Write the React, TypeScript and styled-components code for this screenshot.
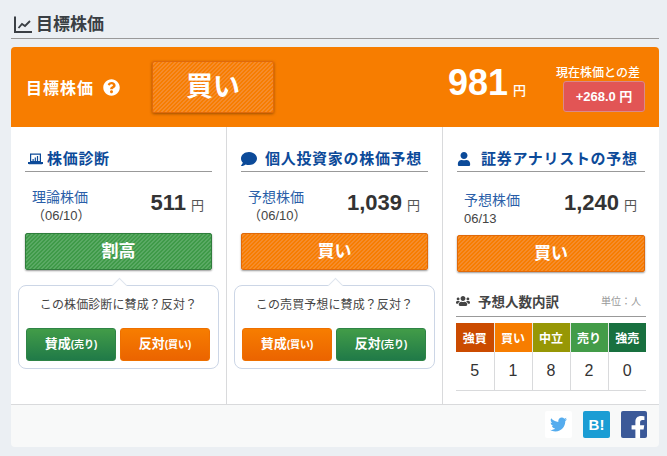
import styled, { createGlobalStyle } from "styled-components";
import { FaComment, FaFacebookF, FaQuestionCircle, FaTwitter, FaUser, FaUsers } from "react-icons/fa";

const GlobalStyle = createGlobalStyle`
  html, body {
    margin: 0;
    padding: 0;
    background: #ebeff3;
  }
  * {
    box-sizing: border-box;
  }
  body {
    font-family: "Liberation Sans", "Noto Sans CJK JP", sans-serif;
    color: #333;
  }
`;

const orangeStripes = "repeating-linear-gradient(135deg, #f77d00 0 1.414px, #f58c2c 1.414px 2.828px)";
const greenStripes = "repeating-linear-gradient(135deg, #3f9a48 0 1.414px, #5aa964 1.414px 2.828px)";

const Page = styled.div`
  width: 667px;
  height: 456px;
  padding: 0 8px 9px 11px;
  overflow: hidden;
`;

//=============================== Title =========================================
const PageTitle = styled.h2`
  display: flex;
  align-items: center;
  gap: 3px;
  height: 39px;
  margin: 0 0 8px;
  padding: 11px 0 0 3px;
  border-bottom: 1px solid #999;
  font-size: 17px;
  line-height: 24px;
  font-weight: 700;
  color: #3a3f44;
`;

//=============================== Banner =========================================
const Banner = styled.div`
  display: flex;
  align-items: center;
  height: 80px;
  padding: 0 14px 0 15px;
  background: #f77d00;
  border-radius: 4px 4px 0 0;
  color: #fff;
`;

const BannerLabel = styled.div`
  display: flex;
  align-items: center;
  gap: 9px;
  width: 126px;
  font-size: 16px;
  letter-spacing: 1px;
  font-weight: 700;
`;

const BannerVerdict = styled.div`
  width: 122px;
  height: 52px;
  margin-top: -1px;
  border: 1px solid #e0690a;
  border-radius: 2px;
  background: ${orangeStripes};
  box-shadow: 0 1px 3px rgba(100, 50, 0, 0.6);
  font-size: 27px;
  line-height: 50px;
  font-weight: 700;
  text-align: center;
`;

const BannerPrice = styled.div`
  margin-left: auto;
  margin-right: 30px;
  font-size: 36px;
  line-height: 40px;
  font-weight: 700;
  small {
    margin-left: 5px;
    font-size: 13px;
    font-weight: 500;
  }
`;

const DiffBox = styled.div`
  display: flex;
  flex-direction: column;
  align-items: flex-end;
  gap: 1px;
  padding-top: 3px;
  font-size: 12px;
  line-height: 14px;
  font-weight: 500;
  white-space: nowrap;
  span {
    margin-right: 5px;
  }
`;

const DiffValue = styled.div`
  width: 82px;
  height: 31px;
  border: 1px solid #d98a8a;
  border-radius: 3px;
  background: #e25555;
  font-size: 13px;
  line-height: 29px;
  font-weight: 700;
  text-align: center;
`;

//=============================== Columns ========================================
const Columns = styled.div`
  display: grid;
  grid-template-columns: 215px 216px 217px;
  height: 278px;
  background: #fff;
  border-bottom: 1px solid #d9dadc;
`;

const Column = styled.section`
  padding: 20px 14px 0;
  & + & {
    border-left: 1px solid #d9dadc;
  }
`;

const Heading = styled.h3<{ $gap: number }>`
  display: flex;
  align-items: center;
  gap: ${(props) => props.$gap}px;
  height: 25px;
  margin: 0;
  padding-bottom: 1px;
  border-bottom: 1px solid #999;
  font-size: 15px;
  letter-spacing: 0.7px;
  line-height: 20px;
  font-weight: 700;
  color: #0c4a99;
  white-space: nowrap;
`;

const PriceRow = styled.div<{ $tall?: boolean }>`
  display: flex;
  align-items: flex-start;
  justify-content: space-between;
  height: ${(props) => (props.$tall ? 63 : 61)}px;
  padding: ${(props) => (props.$tall ? 18 : 15)}px 8px 0 7px;
`;

const PriceLabel = styled.div`
  font-size: 14px;
  line-height: 20px;
  color: #2a5ea8;
`;

const PriceDate = styled.div`
  font-size: 13px;
  line-height: 18px;
  color: #444;
`;

const PriceValue = styled.div<{ $tall?: boolean }>`
  margin-top: ${(props) => (props.$tall ? 0 : 3)}px;
  font-size: 22px;
  line-height: 26px;
  font-weight: 700;
  small {
    margin-left: 5px;
    font-size: 13px;
    font-weight: 400;
    color: #555;
  }
`;

const Verdict = styled.div<{ $tone: "orange" | "green" }>`
  height: 37px;
  border: 1px solid ${(props) => (props.$tone === "orange" ? "#e0690a" : "#2f7d3c")};
  border-radius: 2px;
  background: ${(props) => (props.$tone === "orange" ? orangeStripes : greenStripes)};
  box-shadow: 0 1px 2px rgba(0, 0, 0, 0.4);
  color: #fff;
  font-size: 17px;
  line-height: 35px;
  font-weight: 700;
  text-align: center;
`;

const VoteBox = styled.div`
  position: relative;
  width: 201px;
  height: 84px;
  margin: 15px 0 0 -7px;
  padding: 10px 7px 0;
  border: 1px solid #ccd6e6;
  border-radius: 8px;
  background: #fff;
  &::before {
    content: "";
    position: absolute;
    top: -6px;
    left: 95px;
    width: 10px;
    height: 10px;
    background: #fff;
    border-top: 1px solid #dfe5ee;
    border-left: 1px solid #dfe5ee;
    transform: rotate(45deg);
  }
`;

const VoteQuestion = styled.div`
  margin-bottom: 14px;
  font-size: 12px;
  line-height: 18px;
  letter-spacing: 0.1px;
  text-align: center;
  color: #444;
  white-space: nowrap;
`;

const VoteButtons = styled.div`
  display: flex;
  gap: 4px;
`;

const VoteButton = styled.div<{ $tone: "orange" | "green" }>`
  width: 90px;
  height: 33px;
  border-radius: 3px;
  border: 1px solid ${(props) => (props.$tone === "orange" ? "#ee7000" : "#2f8446")};
  background: ${(props) =>
    props.$tone === "orange"
      ? "linear-gradient(#f77d00, #eb6400)"
      : "linear-gradient(#429c48, #207a48)"};
  color: #fff;
  font-size: 13px;
  line-height: 30px;
  font-weight: 700;
  text-align: center;
  white-space: nowrap;
  small {
    font-size: 10px;
  }
`;

//=============================== Breakdown ======================================
const BreakdownHead = styled.div`
  display: flex;
  align-items: center;
  height: 27px;
  margin: 18px -1px 0;
  padding: 0 5px 5px 0;
  border-bottom: 1px solid #999;
`;

const BreakdownTitle = styled.div`
  display: flex;
  align-items: center;
  gap: 8px;
  font-size: 13.5px;
  font-weight: 700;
  color: #444;
`;

const Unit = styled.div`
  margin-left: auto;
  font-size: 10px;
  color: #999;
`;

const Table = styled.table`
  width: 190px;
  margin: 6px 0 0 -1px;
  border-collapse: collapse;
  table-layout: fixed;
`;

const HeadCell = styled.th<{ $bg: string }>`
  height: 29px;
  padding: 0;
  background: ${(props) => props.$bg};
  color: #fff;
  font-size: 12px;
  font-weight: 700;
  & + & {
    border-left: 1px solid #e6e6e6;
  }
`;

const CountCell = styled.td`
  height: 38px;
  padding: 0;
  border-bottom: 1px solid #d9dadc;
  font-size: 16px;
  text-align: center;
  color: #333;
  & + & {
    border-left: 1px solid #d9dadc;
  }
`;

//=============================== Footer ========================================
const Footer = styled.div`
  display: flex;
  justify-content: flex-end;
  gap: 11px;
  height: 42px;
  padding: 6px 12px 0 0;
  background: #f8f9f9;
  border-radius: 0 0 4px 4px;
`;

const ShareButton = styled.div<{ $bg: string; $color: string; $width?: number }>`
  display: flex;
  align-items: center;
  justify-content: center;
  width: ${(props) => props.$width ?? 27}px;
  height: 27px;
  border-radius: 2px;
  background: ${(props) => props.$bg};
  color: ${(props) => props.$color};
  font-size: 15px;
  font-weight: 700;
  overflow: hidden;
`;

const FacebookMark = styled(FaFacebookF)`
  margin: 7px 0 0 8px;
`;

const LaptopSvg = styled.svg`
  margin-left: 3px;
`;

const ChartIcon = () => (
  <svg width="19" height="19" viewBox="0 0 19 19" fill="none" stroke="#3a3f44">
    <path d="M1 1.5v15.6h17" strokeWidth="2" />
    <path d="M4.5 13l3.5-4 3 2 5-5" strokeWidth="1.8" />
  </svg>
);

const LaptopIcon = () => (
  <LaptopSvg width="15" height="12" viewBox="0 0 15 12" fill="#0c4a99">
    <path d="M2 0.5h11v8.5H2zM3.2 1.7v6.2h8.6V1.7z" fillRule="evenodd" />
    <path d="M4.5 8V6h1.2v2zM6.7 8V4.5h1.2V8zM8.9 8V3h1.2v5z" />
    <path d="M0 9h15v1.3l-1 1H1l-1-1z" />
  </LaptopSvg>
);

const colors = [
  ["強買", "#cb4b00"],
  ["買い", "#f77d00"],
  ["中立", "#979705"],
  ["売り", "#439c48"],
  ["強売", "#18703f"],
];

const counts = [5, 1, 8, 2, 0];

function App() {
  return (
    <Page>
      <GlobalStyle />
      <PageTitle>
        <ChartIcon />
        目標株価
      </PageTitle>

      <Banner>
        <BannerLabel>
          目標株価
          <FaQuestionCircle size={17} />
        </BannerLabel>
        <BannerVerdict>買い</BannerVerdict>
        <BannerPrice>
          981<small>円</small>
        </BannerPrice>
        <DiffBox>
          <span>現在株価との差</span>
          <DiffValue>+268.0 円</DiffValue>
        </DiffBox>
      </Banner>

      <Columns>
        <Column>
          <Heading $gap={4}>
            <LaptopIcon />
            株価診断
          </Heading>
          <PriceRow>
            <div>
              <PriceLabel>理論株価</PriceLabel>
              <PriceDate>（06/10）</PriceDate>
            </div>
            <PriceValue>
              511<small>円</small>
            </PriceValue>
          </PriceRow>
          <Verdict $tone="green">割高</Verdict>
          <VoteBox>
            <VoteQuestion>この株価診断に賛成？反対？</VoteQuestion>
            <VoteButtons>
              <VoteButton $tone="green">
                賛成<small>(売り)</small>
              </VoteButton>
              <VoteButton $tone="orange">
                反対<small>(買い)</small>
              </VoteButton>
            </VoteButtons>
          </VoteBox>
        </Column>

        <Column>
          <Heading $gap={8}>
            <FaComment size={16} />
            個人投資家の株価予想
          </Heading>
          <PriceRow>
            <div>
              <PriceLabel>予想株価</PriceLabel>
              <PriceDate>（06/10）</PriceDate>
            </div>
            <PriceValue>
              1,039<small>円</small>
            </PriceValue>
          </PriceRow>
          <Verdict $tone="orange">買い</Verdict>
          <VoteBox>
            <VoteQuestion>この売買予想に賛成？反対？</VoteQuestion>
            <VoteButtons>
              <VoteButton $tone="orange">
                賛成<small>(買い)</small>
              </VoteButton>
              <VoteButton $tone="green">
                反対<small>(売り)</small>
              </VoteButton>
            </VoteButtons>
          </VoteBox>
        </Column>

        <Column>
          <Heading $gap={10}>
            <FaUser size={14} />
            証券アナリストの予想
          </Heading>
          <PriceRow $tall>
            <div>
              <PriceLabel>予想株価</PriceLabel>
              <PriceDate>06/13</PriceDate>
            </div>
            <PriceValue $tall>
              1,240<small>円</small>
            </PriceValue>
          </PriceRow>
          <Verdict $tone="orange">買い</Verdict>
          <BreakdownHead>
            <BreakdownTitle>
              <FaUsers size={14} />
              予想人数内訳
            </BreakdownTitle>
            <Unit>単位：人</Unit>
          </BreakdownHead>
          <Table>
            <thead>
              <tr>
                {colors.map(([label, bg]) => (
                  <HeadCell key={label} $bg={bg}>
                    {label}
                  </HeadCell>
                ))}
              </tr>
            </thead>
            <tbody>
              <tr>
                {counts.map((count, i) => (
                  <CountCell key={i}>{count}</CountCell>
                ))}
              </tr>
            </tbody>
          </Table>
        </Column>
      </Columns>

      <Footer>
        <ShareButton $bg="#fff" $color="#55acee">
          <FaTwitter size={17} />
        </ShareButton>
        <ShareButton $bg="#1b9dd4" $color="#fff">
          B!
        </ShareButton>
        <ShareButton $bg="#3b5998" $color="#fff" $width={26}>
          <FacebookMark size={24} />
        </ShareButton>
      </Footer>
    </Page>
  );
}

export default App;
